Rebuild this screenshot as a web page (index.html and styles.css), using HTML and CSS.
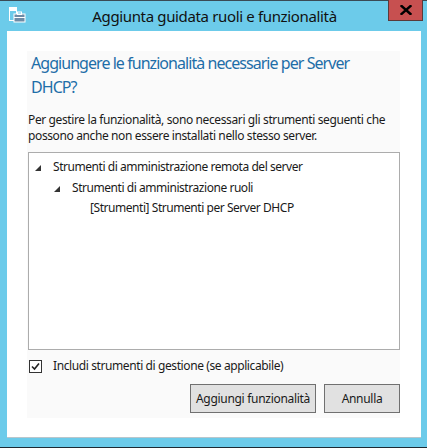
FILE: index.html
```html
<!DOCTYPE html>
<html lang="it">
<head>
<meta charset="utf-8">
<title>Aggiunta guidata ruoli e funzionalità</title>
<link rel="stylesheet" href="styles.css">
</head>
<body>
<div class="window">
  <div class="titlebar">
    <svg class="app-icon" width="18" height="18" viewBox="0 0 18 18">
      <rect x="1.5" y="1.5" width="7" height="13" fill="none" stroke="#fff" stroke-width="1"/>
      <rect x="2" y="2" width="6" height="3" fill="#fff"/>
      <rect x="6" y="8" width="11" height="8" fill="#6d8ba6" stroke="#fff" stroke-width="1"/>
      <rect x="9.5" y="6" width="4" height="2.5" fill="none" stroke="#fff" stroke-width="1"/>
      <line x1="6" y1="11.5" x2="17" y2="11.5" stroke="#fff" stroke-width="1"/>
    </svg>
    <div class="title">Aggiunta guidata ruoli e funzionalità</div>
    <div class="close">
      <svg width="12" height="10" viewBox="0 0 12 10"><path d="M1.5 1 L10.5 9 M10.5 1 L1.5 9" stroke="#000" stroke-width="2.4" stroke-linecap="square"/></svg>
    </div>
  </div>
  <div class="client">
    <div class="panel">
      <h1 class="heading">Aggiungere le funzionalità necessarie per Server<br>DHCP?</h1>
      <p class="desc">Per gestire la funzionalità, sono necessari gli strumenti seguenti che<br>possono anche non essere installati nello stesso server.</p>
      <div class="tree">
        <div class="row lvl0"><span class="tri"></span>Strumenti di amministrazione remota del server</div>
        <div class="row lvl1"><span class="tri"></span>Strumenti di amministrazione ruoli</div>
        <div class="row lvl2">[Strumenti] Strumenti per Server DHCP</div>
      </div>
      <label class="check">
        <span class="box"><svg width="11" height="11" viewBox="0 0 11 11"><path d="M2 5.5 L4.5 8 L9 2.5" fill="none" stroke="#222" stroke-width="1.6"/></svg></span>
        Includi strumenti di gestione (se applicabile)
      </label>
      <div class="buttons">
        <button class="btn btn-add">Aggiungi funzionalità</button>
        <button class="btn btn-cancel">Annulla</button>
      </div>
    </div>
  </div>
</div>
</body>
</html>
```
FILE: styles.css
```css
html, body {
  margin: 0;
  padding: 0;
}
body {
  width: 427px;
  height: 448px;
  overflow: hidden;
  background: #6ccbea;
  font-family: "Noto Sans", "Open Sans", sans-serif;
}
.window {
  height: 446px;
  border-top: 1px solid #3a4a55;
  border-bottom: 1px solid #1d2a33;
  display: flex;
  flex-direction: column;
}
.titlebar {
  height: 30px;
  display: flex;
  align-items: flex-start;
  position: relative;
}
.app-icon {
  margin: 5px 0 0 8px;
}
.title {
  flex: 1;
  text-align: center;
  font-size: 15px;
  color: #111;
  line-height: 30px;
  margin-right: 24px;
  letter-spacing: -0.35px;
  white-space: nowrap;
}
.close {
  position: absolute;
  right: 4px;
  top: -1px;
  width: 33px;
  height: 20px;
  background: #c75050;
  border: 1px solid #5a3a3a;
  border-top: none;
  display: flex;
  align-items: center;
  justify-content: center;
}
.client {
  margin: 0 6px 0 7px;
  height: 407px;
  background: #fff;
  border-bottom: 1px solid #b9c6cc;
  padding: 20px 21px 20px 20px;
  box-sizing: border-box;
}
.panel {
  background: #fafafa;
  height: 367px;
  padding: 0 0 0 1px;
  box-sizing: border-box;
  display: flex;
  flex-direction: column;
}
.heading {
  margin: 0;
  padding: 0 0 0 3px;
  font-weight: normal;
  font-size: 16px;
  line-height: 24px;
  letter-spacing: -0.95px;
  color: #1e6ea8;
  white-space: nowrap;
}
.desc {
  margin: 13px 0 0 0;
  font-size: 12px;
  line-height: 16px;
  letter-spacing: -0.38px;
  color: #1a1a1a;
  white-space: nowrap;
}
.tree {
  margin-top: 8px;
  height: 198px;
  background: #fff;
  border: 1px solid #acacac;
  box-sizing: border-box;
  padding-top: 4px;
}
.row {
  font-size: 12px;
  line-height: 20.5px;
  letter-spacing: -0.45px;
  color: #1a1a1a;
  display: flex;
  align-items: center;
  white-space: nowrap;
}
.lvl0 { padding-left: 6px; }
.lvl1 { padding-left: 25px; }
.lvl2 { padding-left: 61px; }
.tri {
  width: 0;
  height: 0;
  border-left: 6px solid transparent;
  border-bottom: 6px solid #333;
  margin-right: 12px;
  margin-top: 2px;
}
.check {
  margin-top: 9px;
  display: flex;
  align-items: center;
  font-size: 12px;
  letter-spacing: -0.4px;
  color: #1a1a1a;
  line-height: 14px;
}
.box {
  width: 11px;
  height: 11px;
  border: 1px solid #333;
  background: #fff;
  margin: 0 11px 0 1px;
  display: flex;
}
.buttons {
  margin-top: 11px;
  display: flex;
  justify-content: flex-end;
  gap: 8px;
}
.btn {
  height: 29px;
  background: #e1e1e1;
  border: 1px solid #707070;
  font-family: inherit;
  font-size: 12px;
  letter-spacing: -0.3px;
  color: #1a1a1a;
  padding: 0;
}
.btn-add { width: 126px; }
.btn-cancel { width: 76px; }
```
